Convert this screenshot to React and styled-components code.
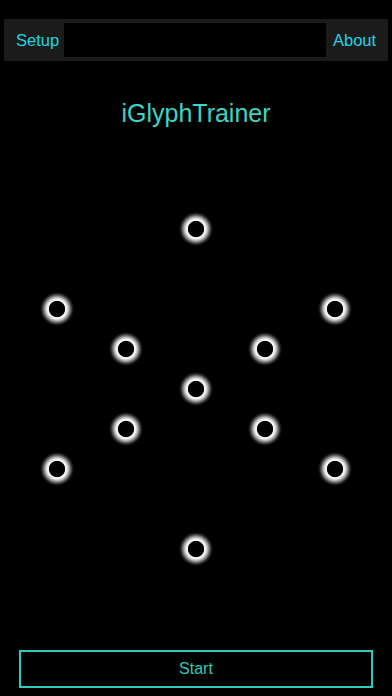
import React from "react";
import styled, { createGlobalStyle } from "styled-components";

const Global = createGlobalStyle`
  html, body { margin: 0; padding: 0; background: #000; }
  body { font-family: "Liberation Sans", Arial, sans-serif; }
`;

const Page = styled.div`
  width: 392px;
  height: 696px;
  display: flex;
  flex-direction: column;
  background: #000;
  overflow: hidden;
`;

const Toolbar = styled.div`
  margin: 19px 4px 0;
  height: 42px;
  background: #1b1b1b;
  display: flex;
  align-items: center;
`;

const NavButton = styled.button`
  width: ${(p) => p.$w}px;
  height: 42px;
  padding: 0 0 0 ${(p) => p.$pl}px;
  border: 0;
  background: transparent;
  color: #1fd6e4;
  font-family: "Liberation Sans", Arial, sans-serif;
  font-size: 16.5px;
  text-align: left;
`;

const Field = styled.div`
  flex: 1;
  height: 34px;
  background: #000;
`;

const Title = styled.h1`
  margin: 38px 0 0;
  font-weight: 400;
  font-size: 25px;
  line-height: 28px;
  text-align: center;
  color: #3cd6c6;
`;

const Board = styled.div`
  position: relative;
  margin-top: 73px;
  height: 380px;
`;

const Node = styled.div`
  position: absolute;
  width: 34px;
  height: 34px;
  margin: -17px 0 0 -17px;
  border-radius: 50%;
  background: radial-gradient(
    circle closest-side,
    #000 0,
    #000 7.7px,
    #fff 8.6px,
    #eeeeee 10px,
    #a6a6a6 12px,
    #5c5c5c 13.8px,
    #222 15.3px,
    rgba(0, 0, 0, 0) 17px
  );
`;

const StartButton = styled.button`
  margin: auto 19px 8px;
  height: 38px;
  border: 2px solid #2ccbbb;
  background: #000;
  color: #2ccbbb;
  font-family: "Liberation Sans", Arial, sans-serif;
  font-size: 16px;
`;

const nodes = [
  [196, 29],
  [57, 109],
  [335, 109],
  [126, 149],
  [265, 149],
  [196, 189],
  [126, 229],
  [265, 229],
  [57, 269],
  [335, 269],
  [196, 349],
];

export default function App() {
  return (
    <Page>
      <Global />
      <Toolbar>
        <NavButton $w={60} $pl={12}>Setup</NavButton>
        <Field />
        <NavButton $w={62} $pl={7}>About</NavButton>
      </Toolbar>
      <Title>iGlyphTrainer</Title>
      <Board>
        {nodes.map(([x, y], i) => (
          <Node key={i} style={{ left: x, top: y }} />
        ))}
      </Board>
      <StartButton>Start</StartButton>
    </Page>
  );
}
